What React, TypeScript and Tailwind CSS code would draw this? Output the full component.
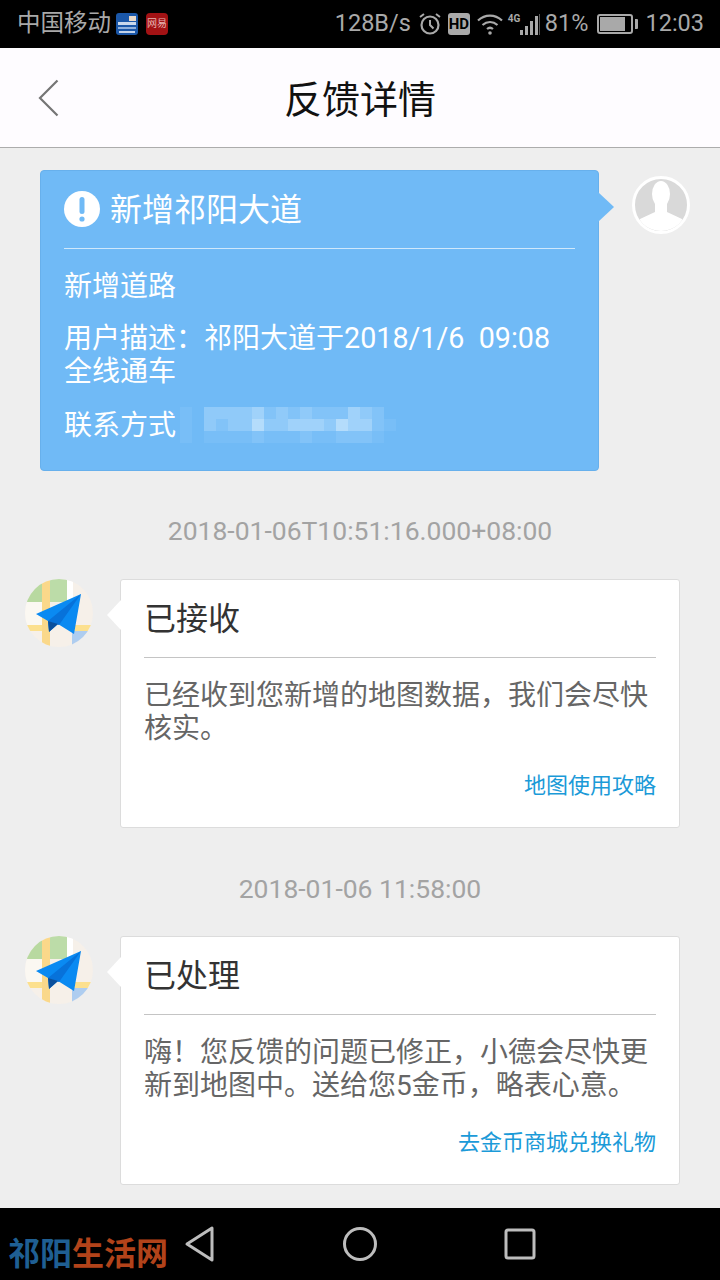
const cjk = "font-['Roboto','Noto_Sans_CJK_SC',sans-serif]";

function StatusBar() {
  return (
    <div className="flex h-[48px] shrink-0 items-center justify-between bg-black pl-[17px] pr-[16px] text-[#a9a9a9]">
      <div className="flex items-center">
        <span className="text-[23.500px] leading-none">中国移动</span>
        <svg width="22" height="22" viewBox="0 0 22 22" className="ml-[5px]">
          <rect width="22" height="22" rx="3" fill="#1b57a8" />
          <rect x="2" y="9" width="18" height="3" fill="#c9d8ec" />
          <rect x="13" y="3" width="7" height="5" fill="#e9d9c9" />
          <rect x="2" y="14" width="18" height="2" fill="#8fb0dc" />
          <rect x="3" y="18" width="16" height="2" fill="#c3d3ea" />
        </svg>
        <span className="ml-[8px] flex h-[22px] w-[22px] items-center justify-center rounded-[4px] bg-[#a31214] text-[10px] leading-none text-[#e6b3b1]">
          网易
        </span>
      </div>
      <div className="flex items-center">
        <span className="text-[23.500px] leading-none">128B/s</span>
        <svg width="24" height="24" viewBox="0 0 24 24" className="ml-[7px]" fill="none" stroke="#a9a9a9">
          <circle cx="12" cy="13" r="8.500" strokeWidth="2.200" />
          <path d="M12 8v5l3.500 3.500" strokeWidth="2" />
          <path d="M2 5l4-3M22 5l-4-3" strokeWidth="2" />
        </svg>
        <span className="ml-[6px] flex h-[22px] w-[22px] items-center justify-center rounded-[3px] bg-[#a9a9a9] text-[15px] font-bold leading-none text-black">
          HD
        </span>
        <svg width="28" height="22" viewBox="0 0 28 22" className="ml-[6px]" fill="none" stroke="#a9a9a9" strokeWidth="2.200">
          <path d="M2 7.500c7-6.500 17-6.500 24 0" />
          <path d="M6.500 12c4.500-4 10.500-4 15 0" />
          <path d="M11 16c1.800-1.500 4.200-1.500 6 0" />
          <circle cx="14" cy="20" r="1.800" fill="#a9a9a9" stroke="none" />
        </svg>
        <div className="relative ml-[4px] h-[24px] w-[33px]">
          <span className="absolute left-0 top-[2px] text-[10px] font-bold leading-none">4G</span>
          <svg width="33" height="24" viewBox="0 0 33 24" fill="#a9a9a9">
            <rect x="12" y="18" width="3" height="5" />
            <rect x="17" y="14" width="3" height="9" />
            <rect x="22" y="9" width="3" height="14" />
            <rect x="27" y="4" width="3" height="19" />
            <rect x="31" y="2" width="1" height="21" fill="#555" />
          </svg>
        </div>
        <span className="ml-[4px] text-[23.500px] leading-none">81%</span>
        <div className="ml-[9px] flex items-center">
          <div className="flex h-[20px] w-[36px] items-center rounded-[3px] border-2 border-[#a9a9a9] p-[1px]">
            <div className="h-full w-[81%] bg-[#a9a9a9]" />
          </div>
          <div className="ml-[2px] h-[10px] w-[3px] rounded-r-[1px] bg-[#a9a9a9]" />
        </div>
        <span className="ml-[7px] text-[23.500px] leading-none">12:03</span>
      </div>
    </div>
  );
}

function Header() {
  return (
    <div className="relative flex h-[100px] shrink-0 items-center justify-center border-b border-[#acacac] bg-[#fefcff] pt-[5px]">
      <svg width="22" height="38" viewBox="0 0 22 38" className="absolute left-[38px] top-[31px]" fill="none" stroke="#757575" strokeWidth="2.200">
        <path d="M19.500 1.500L2 19l17.500 17.500" />
      </svg>
      <span className="text-[38px] leading-none text-[#111]">反馈详情</span>
    </div>
  );
}

const mosaicShades = [
  "bg-transparent",
  "bg-[#78bef7]",
  "bg-[#82c3f8]",
  "bg-[#90caf9]",
  "bg-[#a0d2fa]",
  "bg-[#b4dcfb]",
];

const mosaicRows = ["103333423232224320", "103233533444354421", "101111211121122210"];

// 打码的联系方式
function Mosaic() {
  return (
    <div className="ml-[4px]">
      {mosaicRows.map((row) => (
        <div key={row} className="flex">
          {row.split("").map((cell, i) => (
            <div key={i} className={`h-[12px] w-[12px] ${mosaicShades[Number(cell)]}`} />
          ))}
        </div>
      ))}
    </div>
  );
}

function UserCard() {
  return (
    <div className="flex items-start pl-[40px] pt-[22px]">
      <div className="relative h-[301px] w-[559px] rounded-[4px] border border-[#67b0ec] bg-[#70baf6] px-[23px] text-white">
        <div className="flex h-[78px] items-center border-b border-[#cfe8fb]">
          <svg width="36" height="36" viewBox="0 0 36 36" className="mt-[-1px]">
            <circle cx="18" cy="18" r="18" fill="#fff" />
            <rect x="15.500" y="6" width="5" height="17" rx="2.500" fill="#70baf6" />
            <circle cx="18" cy="28" r="2.600" fill="#70baf6" />
          </svg>
          <span className="ml-[10px] text-[32px] leading-none">新增祁阳大道</span>
        </div>
        <p className="mt-[21px] text-[28px] leading-[33px]">新增道路</p>
        <p className="mt-[19px] text-[28px] leading-[33px]">
          用户描述：祁阳大道于<span className="text-[28.700px]">2018/1/6&nbsp;&nbsp;09:08</span>
          <br />
          全线通车
        </p>
        <div className="mt-[19px] flex items-center text-[28px] leading-[33px]">
          <span>联系方式</span>
          <Mosaic />
        </div>
        <div className="absolute left-full top-[21px] h-0 w-0 border-y-[15px] border-l-[16px] border-y-transparent border-l-[#70baf6]" />
      </div>
      <div className="ml-[33px] mt-[6px] h-[58px] w-[58px] overflow-hidden rounded-full border-[3px] border-white bg-[#d9d9d9]">
        <svg viewBox="0 0 52 52" className="h-full w-full" fill="#fff">
          <ellipse cx="26" cy="15" rx="9" ry="13" />
          <path d="M20 22h12v11l15 7c1 2 2 7 2 12H3c0-5 1-10 2-12l15-7z" />
        </svg>
      </div>
    </div>
  );
}

function MapLogo() {
  return (
    <div className="h-[68px] w-[68px] shrink-0 overflow-hidden rounded-full">
      <svg viewBox="0 0 68 68" className="h-full w-full">
        <rect width="68" height="68" fill="#f6f0e9" />
        <rect x="0" y="0" width="17" height="23" fill="#b8d9a0" />
        <rect x="25" y="0" width="17" height="23" fill="#bcdca8" />
        <rect x="42" y="0" width="6" height="23" fill="#fff" />
        <rect x="0" y="23" width="17" height="23" fill="#fbf8f2" />
        <rect x="0" y="46" width="18" height="6" fill="#fce08e" />
        <rect x="47" y="46" width="21" height="6" fill="#fce08e" />
        <rect x="47" y="52" width="21" height="16" fill="#aecdf0" />
        <rect x="17" y="0" width="8" height="68" fill="#fad88a" />
        <path d="M56 15L11 35l12 7 1 11 9-8 16 10z" fill="#0a8af2" />
        <path d="M56 15L23 42l11 4z" fill="#0772da" />
        <path d="M23 42l1 11 9-8z" fill="#0a4f9c" />
      </svg>
    </div>
  );
}

function ReplyCard({ title, lines, link }: { title: string; lines: string[]; link: string }) {
  return (
    <div className="flex items-start pl-[25px]">
      <MapLogo />
      <div className="relative ml-[27px] h-[249px] w-[560px] rounded-[3px] border border-[#dcdcdc] bg-white px-[23px]">
        <div className="absolute right-full top-[20px] h-0 w-0 border-y-[15px] border-r-[14px] border-y-transparent border-r-white" />
        <div className="flex h-[78px] items-center border-b border-[#c4c4c4]">
          <span className="text-[32px] leading-none text-[#333]">{title}</span>
        </div>
        <p className="mt-[21px] text-[28px] leading-[33px] text-[#666]">
          {lines.map((line) => (
            <span key={line} className="block">
              {line}
            </span>
          ))}
        </p>
        <p className="absolute bottom-[30px] right-[23px] text-[22px] leading-none text-[#1b9ad8]">{link}</p>
      </div>
    </div>
  );
}

function Stamp({ children }: { children: string }) {
  return <p className="h-[27px] text-center text-[26.500px] leading-[27px] text-[#a3a3a3]">{children}</p>;
}

function NavBar() {
  return (
    <div className="relative flex h-[72px] shrink-0 items-center bg-black">
      {/* 水印 */}
      <span className="absolute left-[8px] top-[30px] text-[32px] font-bold leading-none">
        <span className="text-[#1f5f93]">祁阳</span>
        <span className="text-[#b2431a]">生活网</span>
      </span>
      <svg width="32" height="38" viewBox="0 0 32 38" className="absolute left-[184px] top-[17px]" fill="none" stroke="#bdbdbd" strokeWidth="3" strokeLinejoin="round">
        <path d="M28 3v32L3 19z" />
      </svg>
      <svg width="36" height="36" viewBox="0 0 36 36" className="absolute left-[342px] top-[18px]" fill="none" stroke="#bdbdbd" strokeWidth="3">
        <circle cx="18" cy="18" r="15.500" />
      </svg>
      <svg width="32" height="32" viewBox="0 0 32 32" className="absolute left-[504px] top-[20px]" fill="none" stroke="#bdbdbd" strokeWidth="3" strokeLinejoin="round">
        <rect x="2" y="2" width="28" height="28" rx="2" />
      </svg>
    </div>
  );
}

export default function App() {
  return (
    <div className={`flex h-[1280px] w-[720px] flex-col overflow-hidden bg-[#eeeeee] ${cjk}`}>
      <StatusBar />
      <Header />
      <div className="flex-1 overflow-hidden">
        <UserCard />
        <div className="mt-[46px]">
          <Stamp>2018-01-06T10:51:16.000+08:00</Stamp>
        </div>
        <div className="mt-[35px]">
          <ReplyCard title="已接收" lines={["已经收到您新增的地图数据，我们会尽快", "核实。"]} link="地图使用攻略" />
        </div>
        <div className="mt-[47px]">
          <Stamp>2018-01-06 11:58:00</Stamp>
        </div>
        <div className="mt-[34px]">
          <ReplyCard title="已处理" lines={["嗨！您反馈的问题已修正，小德会尽快更", "新到地图中。送给您5金币，略表心意。"]} link="去金币商城兑换礼物" />
        </div>
      </div>
      <NavBar />
    </div>
  );
}
